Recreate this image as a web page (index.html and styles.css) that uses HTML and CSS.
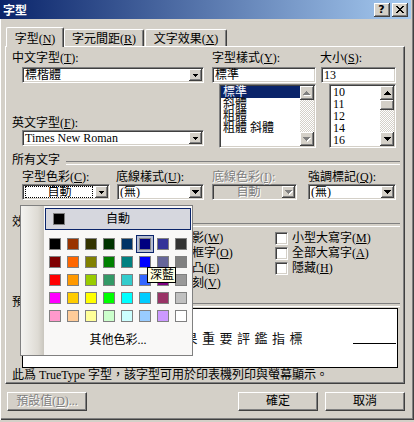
FILE: index.html
```html
<!DOCTYPE html>
<html lang="zh-Hant">
<head>
<meta charset="UTF-8">
<title>字型</title>
<link rel="stylesheet" href="styles.css">
</head>
<body>
<div class="window">
    <div class="titlebar">
        <span class="title">字型</span>
        <span class="tb-btn help">?</span>
        <span class="tb-btn"><svg width="8" height="7" viewBox="0 0 8 7"><path d="M0 0h2v1H0zM6 0h2v1H6zM1 1h2v1H1zM5 1h2v1H5zM2 2h4v1H2zM3 3h2v1H3zM2 4h4v1H2zM1 5h2v1H1zM5 5h2v1H5zM0 6h2v1H0zM6 6h2v1H6z"/></svg></span>
    </div>

    <div class="tabs">
        <div class="tab active">字型(<u>N</u>)</div>
        <div class="tab">字元間距(<u>R</u>)</div>
        <div class="tab third">文字效果(<u>X</u>)</div>
    </div>

    <div class="panel">
        <div class="font-row">
            <div class="col col-cn">
                <span class="lbl">中文字型(<u>T</u>):</span>
                <div class="combo sunken">
                    <span class="val">標楷體</span>
                    <span class="drop"><svg width="5" height="3" viewBox="0 0 5 3"><path d="M0 0h5v1H0zM1 1h3v1H1zM2 2h1v1H2z"/></svg></span>
                </div>
                <span class="lbl lbl-en">英文字型(<u>F</u>):</span>
                <div class="combo sunken">
                    <span class="val latin">Times New Roman</span>
                    <span class="drop"><svg width="5" height="3" viewBox="0 0 5 3"><path d="M0 0h5v1H0zM1 1h3v1H1zM2 2h1v1H2z"/></svg></span>
                </div>
            </div>
            <div class="col col-style">
                <span class="lbl">字型樣式(<u>Y</u>):</span>
                <div class="field sunken">標準</div>
                <div class="listbox sunken">
                    <ul>
                        <li class="sel">標準</li>
                        <li>斜體</li>
                        <li>粗體</li>
                        <li>粗體 斜體</li>
                    </ul>
                    <div class="sb">
                        <span class="sb-btn"><svg width="8" height="5" viewBox="0 0 8 5"><path fill="#fff" d="M4 1h1v1H4zM3 2h3v1H3zM2 3h5v1H2zM1 4h7v1H1z"/><path fill="#808080" d="M3 0h1v1H3zM2 1h3v1H2zM1 2h5v1H1zM0 3h7v1H0z"/></svg></span>
                        <span class="sb-track"></span>
                        <span class="sb-btn"><svg width="8" height="5" viewBox="0 0 8 5"><path fill="#fff" d="M1 1h7v1H1zM2 2h5v1H2zM3 3h3v1H3zM4 4h1v1H4z"/><path fill="#808080" d="M0 0h7v1H0zM1 1h5v1H1zM2 2h3v1H2zM3 3h1v1H3z"/></svg></span>
                    </div>
                </div>
            </div>
            <div class="col col-size">
                <span class="lbl">大小(<u>S</u>):</span>
                <div class="field sunken">13</div>
                <div class="listbox sunken">
                    <ul>
                        <li>10</li>
                        <li>11</li>
                        <li>12</li>
                        <li>14</li>
                        <li>16</li>
                    </ul>
                    <div class="sb">
                        <span class="sb-btn"><svg width="7" height="4" viewBox="0 0 7 4"><path d="M3 0h1v1H3zM2 1h3v1H2zM1 2h5v1H1zM0 3h7v1H0z"/></svg></span>
                        <span class="sb-thumb"></span>
                        <span class="sb-track"></span>
                        <span class="sb-btn"><svg width="7" height="4" viewBox="0 0 7 4"><path d="M0 0h7v1H0zM1 1h5v1H1zM2 2h3v1H2zM3 3h1v1H3z"/></svg></span>
                    </div>
                </div>
            </div>
        </div>

        <div class="group g-all">所有文字</div>
        <div class="color-row">
            <div class="cf cf-color">
                <span class="lbl">字型色彩(<u>C</u>):</span>
                <div class="combo sunken">
                    <span class="val focus">自動</span>
                    <span class="drop"><svg width="5" height="3" viewBox="0 0 5 3"><path d="M0 0h5v1H0zM1 1h3v1H1zM2 2h1v1H2z"/></svg></span>
                </div>
            </div>
            <div class="cf cf-under">
                <span class="lbl">底線樣式(<u>U</u>):</span>
                <div class="combo sunken">
                    <span class="val">(無)</span>
                    <span class="drop"><svg width="7" height="4" viewBox="0 0 7 4"><path d="M0 0h7v1H0zM1 1h5v1H1zM2 2h3v1H2zM3 3h1v1H3z"/></svg></span>
                </div>
            </div>
            <div class="cf cf-ucolor">
                <span class="lbl off">底線色彩(<u>I</u>):</span>
                <div class="combo sunken disabled">
                    <span class="val center off">自動</span>
                    <span class="drop"><svg width="8" height="5" viewBox="0 0 8 5"><path fill="#fff" d="M1 1h7v1H1zM2 2h5v1H2zM3 3h3v1H3zM4 4h1v1H4z"/><path fill="#808080" d="M0 0h7v1H0zM1 1h5v1H1zM2 2h3v1H2zM3 3h1v1H3z"/></svg></span>
                </div>
            </div>
            <div class="cf cf-mark">
                <span class="lbl">強調標記(<u>Q</u>):</span>
                <div class="combo sunken">
                    <span class="val">(無)</span>
                    <span class="drop"><svg width="7" height="4" viewBox="0 0 7 4"><path d="M0 0h7v1H0zM1 1h5v1H1zM2 2h3v1H2zM3 3h1v1H3z"/></svg></span>
                </div>
            </div>
        </div>

        <div class="group g-effects">效果</div>
        <div class="effects">
            <label class="check"><span class="box sunken"></span>刪除線(<u>K</u>)</label>
            <label class="check"><span class="box sunken"></span>雙刪除線(<u>G</u>)</label>
            <label class="check"><span class="box sunken"></span>上標(<u>P</u>)</label>
            <label class="check"><span class="box sunken"></span>下標(<u>B</u>)</label>
            <label class="check"><span class="box sunken"></span>陰影(<u>W</u>)</label>
            <label class="check"><span class="box sunken"></span>外框字(<u>O</u>)</label>
            <label class="check"><span class="box sunken"></span>浮凸(<u>E</u>)</label>
            <label class="check"><span class="box sunken"></span>陰刻(<u>V</u>)</label>
            <label class="check"><span class="box sunken"></span>小型大寫字(<u>M</u>)</label>
            <label class="check"><span class="box sunken"></span>全部大寫字(<u>A</u>)</label>
            <label class="check"><span class="box sunken"></span>隱藏(<u>H</u>)</label>
        </div>

        <div class="group g-preview">預覽</div>
        <div class="preview">
            <span class="sample">教學成果重要評鑑指標</span>
            <span class="rule"></span>
        </div>
        <p class="caption">此爲 TrueType 字型，該字型可用於印表機列印與螢幕顯示。</p>
    </div>

    <div class="buttons">
        <button class="btn" disabled>預設值(<u>D</u>)...</button>
        <button class="btn ok">確定</button>
        <button class="btn">取消</button>
    </div>

    <!-- color picker drop-down, open over the dialog -->
    <div class="color-menu">
        <div class="auto"><span class="sq"></span><span>自動</span></div>
        <div class="swatches">
            <span class="cell"><i style="background:#000000"></i></span>
            <span class="cell"><i style="background:#993300"></i></span>
            <span class="cell"><i style="background:#333300"></i></span>
            <span class="cell"><i style="background:#003300"></i></span>
            <span class="cell"><i style="background:#003366"></i></span>
            <span class="cell on"><i style="background:#000080"></i></span>
            <span class="cell"><i style="background:#333399"></i></span>
            <span class="cell"><i style="background:#333333"></i></span>

            <span class="cell"><i style="background:#800000"></i></span>
            <span class="cell"><i style="background:#ff6600"></i></span>
            <span class="cell"><i style="background:#808000"></i></span>
            <span class="cell"><i style="background:#008000"></i></span>
            <span class="cell"><i style="background:#008080"></i></span>
            <span class="cell"><i style="background:#0000ff"></i></span>
            <span class="cell"><i style="background:#666699"></i></span>
            <span class="cell"><i style="background:#808080"></i></span>

            <span class="cell"><i style="background:#ff0000"></i></span>
            <span class="cell"><i style="background:#ff9900"></i></span>
            <span class="cell"><i style="background:#99cc00"></i></span>
            <span class="cell"><i style="background:#339966"></i></span>
            <span class="cell"><i style="background:#33cccc"></i></span>
            <span class="cell"><i style="background:#3366ff"></i></span>
            <span class="cell"><i style="background:#800080"></i></span>
            <span class="cell"><i style="background:#999999"></i></span>

            <span class="cell"><i style="background:#ff00ff"></i></span>
            <span class="cell"><i style="background:#ffcc00"></i></span>
            <span class="cell"><i style="background:#ffff00"></i></span>
            <span class="cell"><i style="background:#00ff00"></i></span>
            <span class="cell"><i style="background:#00ffff"></i></span>
            <span class="cell"><i style="background:#00ccff"></i></span>
            <span class="cell"><i style="background:#993366"></i></span>
            <span class="cell"><i style="background:#c0c0c0"></i></span>

            <span class="cell"><i style="background:#ff99cc"></i></span>
            <span class="cell"><i style="background:#ffcc99"></i></span>
            <span class="cell"><i style="background:#ffff99"></i></span>
            <span class="cell"><i style="background:#ccffcc"></i></span>
            <span class="cell"><i style="background:#ccffff"></i></span>
            <span class="cell"><i style="background:#99ccff"></i></span>
            <span class="cell"><i style="background:#cc99ff"></i></span>
            <span class="cell"><i style="background:#ffffff"></i></span>
        </div>
        <div class="more">其他色彩...</div>
    </div>
    <div class="tip">深藍</div>
</div>
</body>
</html>
```

FILE: styles.css
```css
* {
    box-sizing: border-box;
}
body {
    margin: 0;
    background: #d4d0c8;
    color: #000;
    font: 12px/13px "Liberation Serif", "Noto Sans CJK TC", serif;
}
u {
    text-decoration: underline;
}
.window {
    position: relative;
    width: 414px;
    height: 420px;
    padding-right: 3px;
    background: #d4d0c8;
    box-shadow: inset 1px 0 #fff, inset -1px -1px #404040, inset -2px -2px #808080;
}

/* title bar */
.titlebar {
    display: flex;
    align-items: center;
    height: 19px;
    padding: 0 3px;
    background: linear-gradient(to right, #0a246a, #a6caf0);
}
.title {
    flex: 1;
    color: #fff;
    font-weight: bold;
    font-family: "Noto Sans CJK TC", sans-serif;
    line-height: 19px;
}
.tb-btn {
    display: flex;
    align-items: center;
    justify-content: center;
    width: 16px;
    height: 14px;
    background: #d4d0c8;
    box-shadow: inset -1px -1px #404040, inset 1px 1px #fff, inset -2px -2px #808080;
}
.tb-btn + .tb-btn {
    margin-left: 2px;
}
.help {
    font: bold 11px/14px "DejaVu Sans", sans-serif;
    padding-right: 1px;
}

/* tabs */
.tabs {
    display: flex;
    align-items: flex-end;
    margin-top: 8px;
    padding-left: 6px;
}
.tab {
    width: 80px;
    height: 17px;
    padding-top: 3px;
    text-align: center;
    white-space: nowrap;
    border: 1px solid;
    border-color: #fff #404040 transparent #fff;
    border-bottom: none;
    border-radius: 2px 2px 0 0;
    box-shadow: inset -1px 0 #808080;
}
.tab.active {
    position: relative;
    z-index: 1;
    width: 58px;
    height: 20px;
    margin-bottom: -1px;
    padding-top: 5px;
    background: #d4d0c8;
}
.tab.third {
    width: 82px;
    margin-left: 1px;
}

.panel {
    width: 400px;
    height: 338px;
    margin-left: 5px;
    padding: 5px 4px 0 6px;
    border: 1px solid;
    border-color: #fff #404040 #404040 #fff;
    box-shadow: inset -1px -1px #808080;
}
.lbl {
    display: block;
    height: 13px;
    white-space: nowrap;
}
.off {
    color: #808080;
    text-shadow: 1px 1px #fff;
}

/* sunken controls */
.sunken {
    background: #fff;
    border: 1px solid;
    border-color: #808080 #fff #fff #808080;
    box-shadow: inset 1px 1px #404040, inset -1px -1px #d4d0c8;
}
.combo {
    display: flex;
    height: 16px;
    padding: 1px;
}
.combo .val {
    flex: 1;
    padding-left: 1px;
    line-height: 12px;
    white-space: nowrap;
    overflow: hidden;
}
.combo .latin {
    font-family: "Liberation Serif", serif;
}
.combo .center {
    text-align: center;
}
.combo .focus {
    height: 12px;
    margin: 0 2px 0 1px;
    line-height: 11px;
    text-align: center;
    overflow: visible;
    border: 1px dotted #000;
}
.combo.disabled {
    background: #d4d0c8;
}
.drop {
    display: flex;
    align-items: center;
    justify-content: center;
    width: 13px;
    height: 12px;
    background: #d4d0c8;
    box-shadow: inset -1px -1px #404040, inset 1px 1px #fff, inset -2px -2px #808080;
}
.field {
    height: 16px;
    padding: 1px 2px;
    line-height: 13px;
}

/* font / style / size */
.font-row {
    display: flex;
}
.col .combo,
.col .field {
    margin-top: 2px;
}
.col-cn {
    width: 192px;
}
.col-cn .combo {
    margin-left: 10px;
}
.col-cn .lbl-en {
    margin-top: 34px;
}
.col-cn .lbl-en + .combo {
    margin-top: 0;
}
.col-style {
    width: 104px;
    margin-left: 8px;
}
.col-size {
    width: 76px;
    margin-left: 4px;
}
.col-size .field {
    margin-left: 1px;
}
.listbox {
    display: flex;
    height: 64px;
    margin-top: 1px;
    padding: 1px;
}
.col-style .listbox {
    margin-left: 7px;
}
.col-size .listbox {
    margin-left: 9px;
}
.listbox ul {
    flex: 1;
    margin: 0;
    padding: 0;
    list-style: none;
}
.listbox li {
    height: 12px;
    padding-left: 2px;
    line-height: 12px;
    white-space: nowrap;
}
.listbox li.sel {
    background: #0a246a;
    color: #fff;
}
.sb {
    display: flex;
    flex-direction: column;
    width: 14px;
}
.sb-btn,
.sb-thumb {
    display: flex;
    align-items: center;
    justify-content: center;
    height: 14px;
    background: #d4d0c8;
    box-shadow: inset -1px -1px #404040, inset 1px 1px #fff, inset -2px -2px #808080;
}
.sb-thumb {
    height: 10px;
}
.sb-track {
    flex: 1;
    background: conic-gradient(#d4d0c8 90deg, #fff 90deg 180deg, #d4d0c8 180deg 270deg, #fff 270deg) 0 0 / 2px 2px;
}

/* group headers */
.group {
    display: flex;
    height: 13px;
    white-space: nowrap;
}
.group::after {
    content: "";
    flex: 1;
    height: 2px;
    margin: 7px 0 0 6px;
    border-top: 1px solid #808080;
    border-bottom: 1px solid #fff;
}
.g-all {
    margin-top: 6px;
}
.g-effects {
    margin-top: 16px;
}
.g-preview {
    margin-top: 5px;
    height: 12px;
}

/* colour row */
.color-row {
    display: flex;
    margin-top: 4px;
    padding-left: 10px;
}
.cf-color {
    width: 88px;
}
.cf-under {
    width: 88px;
    margin-left: 6px;
}
.cf-under .combo {
    margin-left: 1px;
}
.cf-ucolor {
    width: 85px;
    margin-left: 8px;
}
.cf-mark {
    width: 88px;
    margin-left: 11px;
}

/* effects */
.effects {
    display: grid;
    grid-template-columns: 141px 112px 1fr;
    grid-template-rows: repeat(4, 15px);
    grid-auto-flow: column;
    margin: 2px 0 0 10px;
}
.check {
    display: flex;
    align-items: center;
    white-space: nowrap;
}
.check .box {
    width: 13px;
    height: 13px;
    margin-right: 4px;
}

/* preview */
.preview {
    display: flex;
    width: 376px;
    height: 60px;
    margin-left: 10px;
    padding-left: 109px;
    background: #fff;
    border: 1px solid #000;
    align-items: center;
}
.sample {
    font: 13px/16px "Noto Sans CJK TC", sans-serif;
    letter-spacing: 4.5px;
    color: #111;
    white-space: nowrap;
}
.rule {
    align-self: flex-start;
    width: 43px;
    height: 1px;
    margin: 34px 1px 0 auto;
    background: #000;
}
.caption {
    margin: 1px 0 0;
    white-space: nowrap;
}

/* bottom buttons */
.buttons {
    display: flex;
    gap: 7px;
    margin-top: 8px;
    padding: 0 6px 0 7px;
}
.btn {
    width: 80px;
    height: 19px;
    padding: 0;
    font: inherit;
    color: #000;
    background: #d4d0c8;
    border: 1px solid;
    border-color: #fff #404040 #404040 #fff;
    box-shadow: inset -1px -1px #808080;
}
.btn:disabled {
    color: #808080;
    text-shadow: 1px 1px #fff;
}
.btn.ok {
    margin-left: auto;
}

/* colour drop-down */
.color-menu {
    position: absolute;
    left: 20px;
    top: 205px;
    width: 173px;
    height: 151px;
    padding: 2px 0 0 24px;
    border: 1px solid #808080;
    background: linear-gradient(to right, #f4f3f0, #dedbd4 17px, #c9c6be 23px, #f9f8f7 23px);
}
.auto {
    display: flex;
    align-items: center;
    width: 146px;
    height: 22px;
    padding-left: 7px;
    background: #d6d7de;
    border: 1px solid #0a246a;
}
.auto .sq {
    width: 12px;
    height: 12px;
    background: #000;
    border: 1px solid #808080;
}
.auto span + span {
    flex: 1;
    padding-right: 19px;
    text-align: center;
}
.swatches {
    display: grid;
    grid-template-columns: repeat(8, 18px);
    grid-auto-rows: 18px;
    margin: 5px 0 0 1px;
}
.cell i {
    display: block;
    width: 12px;
    height: 12px;
    margin: 3px;
    border: 1px solid #808080;
}
.cell.on {
    background: #b6bdd2;
    outline: 1px solid #0a246a;
    outline-offset: -1px;
}
.more {
    width: 146px;
    height: 22px;
    margin-top: 4px;
    line-height: 22px;
    text-align: center;
}
.tip {
    position: absolute;
    left: 147px;
    top: 267px;
    width: 29px;
    height: 16px;
    padding-left: 2px;
    line-height: 14px;
    background: #ffffe1;
    border: 1px solid #000;
}
```
